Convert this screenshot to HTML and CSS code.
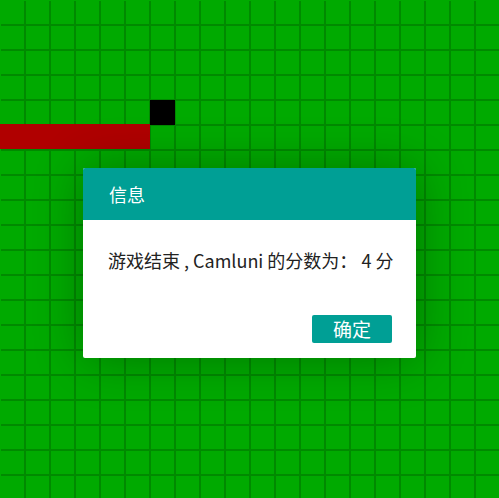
FILE: index.html
```html
<!DOCTYPE html>
<html lang="zh-CN">
<head>
<meta charset="utf-8">
<title>贪吃蛇</title>
<link rel="stylesheet" href="styles.css">
</head>
<body>
<div class="board">
  <div class="snake-head"></div>
  <div class="snake-body"></div>
</div>
<div class="dialog">
  <div class="dialog-title">信息</div>
  <div class="dialog-content">游戏结束 , Camluni 的分数为： 4 分</div>
  <div class="dialog-btns"><a class="btn">确定</a></div>
</div>
</body>
</html>
```
FILE: styles.css
```css
html, body {
  margin: 0;
  padding: 0;
  width: 100%;
  height: 100%;
  overflow: hidden;
  background: #00aa00;
  font-family: "Noto Sans CJK SC", "Noto Sans", sans-serif;
}
.board {
  position: relative;
  width: 100%;
  height: 100%;
  box-sizing: border-box;
  border-left: 1px solid #00aa00;
  border-top: 1px solid #00aa00;
  background-color: #00aa00;
  background-origin: padding-box;
  background-clip: padding-box;
  background-image:
    linear-gradient(to right, transparent 23px, #008a00 23px, #008a00 25px),
    linear-gradient(to bottom, transparent 23px, #008a00 23px, #008a00 25px);
  background-size: 25px 25px;
}
.snake-head {
  position: absolute;
  left: 149px;
  top: 99px;
  width: 25px;
  height: 25px;
  background: #000;
}
.snake-body {
  position: absolute;
  left: -1px;
  top: 123px;
  width: 150px;
  height: 25px;
  background: #b00000;
}
.dialog {
  position: absolute;
  left: 83px;
  top: 168px;
  width: 333px;
  background: #fff;
  border-radius: 2px;
  box-shadow: 1px 1px 50px rgba(0, 0, 0, 0.3);
  display: flex;
  flex-direction: column;
}
.dialog-title {
  height: 52px;
  line-height: 52px;
  padding: 0 26px;
  background: #009f95;
  color: #fff;
  font-size: 18px;
  border-radius: 2px 2px 0 0;
}
.dialog-content {
  padding: 28px 10px 19px 25px;
  line-height: 24px;
  font-size: 18px;
  color: #222;
  white-space: nowrap;
}
.dialog-btns {
  display: flex;
  justify-content: flex-end;
  padding: 24px 24px 15px;
}
.btn {
  display: block;
  width: 80px;
  height: 28px;
  line-height: 28px;
  text-align: center;
  background: #009f95;
  color: #fff;
  font-size: 19px;
  border-radius: 2px;
}
```
